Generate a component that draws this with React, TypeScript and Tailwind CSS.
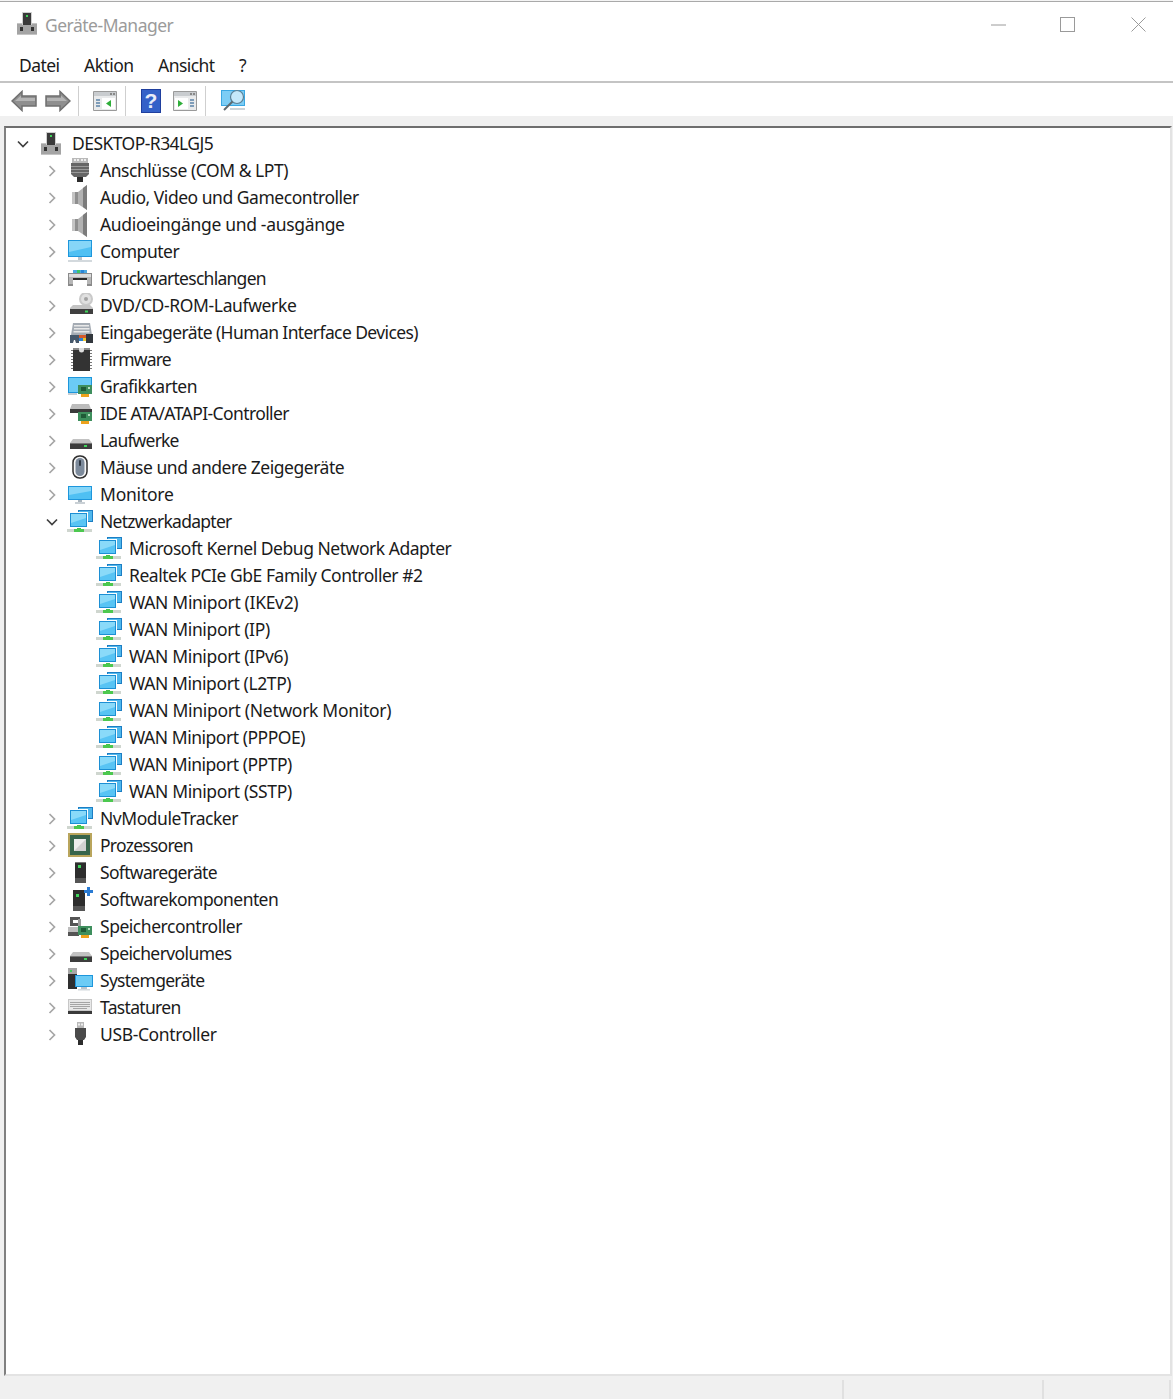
import React from "react";

const S = ({ children }: { children: React.ReactNode }) => (
  <svg width={26} height={26} viewBox="0 0 26 26">{children}</svg>
);

const Tower = () => (
  <S>
    <path d="M3 12h20v12H3z" fill="#a4a4a4" />
    <path d="M3 12h20v1H3zM3 23h20v1H3z" fill="#c4c4c4" />
    <path d="M8 1h10v13H8z" fill="#d0d0d0" />
    <path d="M9 2h8v12H9z" fill="#3a3a3a" />
    <rect x="12" y="4" width="2" height="2" fill="#3fd45a" />
    <rect x="6" y="16" width="3" height="4" fill="#333" />
    <rect x="17" y="16" width="3" height="4" fill="#333" />
  </S>
);
const Port = () => (
  <S>
    <path d="M5 0h16v5H5z" fill="#b9b9b9" />
    <path d="M7 1h2v2H7zM10 1h2v2h-2zM14 1h2v2h-2zM17 1h2v2h-2z" fill="#eee" />
    <path d="M4 5h18v11l-3 3H7l-3-3z" fill="#666" />
    <path d="M4 8h18v1H4zM4 11h18v1H4zM4 14h18v1H4z" fill="#9a9a9a" />
    <path d="M10 19h6v5h-6z" fill="#2c2c2c" />
  </S>
);
const Speaker = () => (
  <S>
    <path d="M5 7h6v12H5z" fill="#8f8f8f" />
    <path d="M5 7h3v12H5z" fill="#c4c4c4" />
    <path d="M11 7l9-7v25l-9-6z" fill="#b2b2b2" />
    <path d="M16 3l4-3v25l-4-3z" fill="#7c7c7c" />
  </S>
);
const Computer = () => (
  <S>
    <path d="M1 1h24v17H1z" fill="#1d96dc" />
    <path d="M2 2h22v15H2z" fill="#4fc0f3" />
    <path d="M2 2h22v6L2 13z" fill="#86d6f8" />
    <path d="M11 18h4v3h-4z" fill="#b9c4cc" />
    <path d="M1 21h24v2H1z" fill="#d3d9dd" />
  </S>
);
const MonitorIcon = () => (
  <S>
    <path d="M1 4h24v14H1z" fill="#1d96dc" />
    <path d="M2 5h22v12H2z" fill="#4fc0f3" />
    <path d="M2 5h22v4L2 13z" fill="#86d6f8" />
    <path d="M11 18h4v2h-4z" fill="#a9b4bc" />
    <path d="M8 20h10v2H8z" fill="#c9d0d5" />
  </S>
);
const Printer = () => (
  <S>
    <path d="M6 4h14v4H6z" fill="#4da8e0" />
    <path d="M10 4h3v4h-3z" fill="#38c66a" />
    <path d="M14 4h3v4h-3z" fill="#2a86d8" />
    <path d="M1 7h24v13H1z" fill="#8a8a8a" />
    <path d="M2 8h22v3H2z" fill="#dcdcdc" />
    <path d="M2 11h22v7H2z" fill="#b6b6b6" />
    <path d="M6 12h14v9H6z" fill="#fff" />
    <path d="M6 12h14v2H6z" fill="#2a2a2a" />
  </S>
);
const Dvd = () => (
  <S>
    <circle cx="19" cy="6" r="7" fill="#c9c9c9" />
    <circle cx="19" cy="6" r="5" fill="#e0e0e0" />
    <circle cx="19" cy="6" r="2" fill="#a2a2a2" />
    <path d="M6 12h17l3 3v6H3v-6z" fill="#c4c4c4" />
    <path d="M3 16h23v5H3z" fill="#3f3f3f" />
    <rect x="18" y="17.500" width="3" height="2" fill="#3fd45a" />
  </S>
);
const Hid = () => (
  <S>
    <path d="M6 3h17l2 12H4z" fill="#a5acb4" />
    <path d="M7 5h15v1.500H7zM7 8h15.500v1.500H7zM6.500 11h16v1.500h-16z" fill="#e8e8e8" />
    <path d="M3 15h9v8H9l-1-3H7l-1 3H3z" fill="#46586b" />
    <path d="M19 14h7v9h-7z" fill="#32373d" />
    <path d="M12 15h7v3h-7z" fill="#d55a2a" />
    <path d="M12 18h4v3h-4z" fill="#2b7fd0" />
    <path d="M16 18h3v3h-3z" fill="#eac32c" />
  </S>
);
const Chip = () => (
  <S>
    <path d="M6 1h17v23H6z" fill="#333" />
    <path d="M6 1h17v2H6z" fill="#8a8a8a" />
    <path d="M4 3h2v1H4zM4 6h2v1H4zM4 9h2v1H4zM4 12h2v1H4zM4 15h2v1H4zM4 18h2v1H4zM4 21h2v1H4zM23 3h2v1h-2zM23 6h2v1h-2zM23 9h2v1h-2zM23 12h2v1h-2zM23 15h2v1h-2zM23 18h2v1h-2zM23 21h2v1h-2z" fill="#777" />
    <path d="M12 1h5v2a2.500 2.500 0 0 1-5 0z" fill="#ddd" />
  </S>
);
const Board = ({ x = 0, y = 0 }: { x?: number; y?: number }) => (
  <g transform={`translate(${x} ${y})`}>
    <path d="M0 0h14v9H0z" fill="#3e8f5d" />
    <path d="M3 2h5v4H3z" fill="#1f5a37" />
    <path d="M10 2h2v2h-2z" fill="#b6e0c0" />
    <path d="M3 9h8v3H3z" fill="#eda21c" />
  </g>
);
const Gpu = () => (
  <S>
    <path d="M1 3h24v16H1z" fill="#1d96dc" />
    <path d="M2 4h22v14H2z" fill="#6bcbf5" />
    <path d="M1 19h9v2H1z" fill="#c5ced4" />
    <Board x={11} y={11} />
  </S>
);
const Ide = () => (
  <S>
    <path d="M5 3h17l2 5H3z" fill="#bcbcbc" />
    <path d="M3 8h22v4H3z" fill="#3a3a3a" />
    <Board x={11} y={11} />
  </S>
);
const Drive = () => (
  <S>
    <path d="M6 11h16l3 4v6H3v-6z" fill="#c2c2c2" />
    <path d="M3 15h22v6H3z" fill="#3d3d3d" />
    <path d="M3 15h22v1H3z" fill="#777" />
    <rect x="17" y="17" width="3" height="2" fill="#3fd45a" />
  </S>
);
const Mouse = () => (
  <S>
    <rect x="6" y="1" width="14" height="22" rx="6.500" fill="#f5f5f5" stroke="#2e2e2e" strokeWidth="1.500" />
    <rect x="8.500" y="3" width="9" height="18" rx="4.500" fill="#7c8a9b" />
    <rect x="12" y="5" width="2" height="6" rx="1" fill="#2e3742" />
  </S>
);
const Net = () => (
  <S>
    <path d="M11 1h15v12H11z" fill="#1c7ec4" />
    <path d="M12 2h13v10H12z" fill="#4fb7ec" />
    <path d="M2 3h19v16H2z" fill="#fff" />
    <path d="M3 4h17v14H3z" fill="#1c8fd4" />
    <path d="M4 5h15v12H4z" fill="#58c4f4" />
    <path d="M4 5h15v4L4 14z" fill="#8adaf9" />
    <path d="M10 19h4v2h-4z" fill="#46c24a" />
    <path d="M0 20h25v3H0z" fill="#cfd6cf" />
    <path d="M7 20h10v3H7z" fill="#4cc84f" />
  </S>
);
const Cpu = () => (
  <S>
    <path d="M1 0h24v24H1z" fill="#b9a55c" />
    <path d="M3 2h20v20H3z" fill="#37654b" />
    <path d="M7 6h12v12H7z" fill="#d0d0d0" />
    <path d="M7 6h12L7 18z" fill="#ededed" />
  </S>
);
const SoftDev = () => (
  <S>
    <path d="M8 2h11v21H8z" fill="#2d2d2d" />
    <path d="M8 2h11v1H8z" fill="#777" />
    <rect x="11" y="5" width="3" height="3" fill="#3fd45a" />
    <path d="M8 18h11v5H8z" fill="#555" />
  </S>
);
const SoftComp = () => (
  <S>
    <path d="M6 3h12v21H6z" fill="#2d2d2d" />
    <rect x="9" y="7" width="3" height="3" fill="#3fd45a" />
    <path d="M6 19h12v5H6z" fill="#555" />
    <path d="M20 0h3v3h3v3h-3v3h-3V6h-3V3h3z" fill="#2a7bd3" />
  </S>
);
const StorageCtrl = () => (
  <S>
    <path d="M3 3h10v3H6v3h5v3H3z" fill="#555" />
    <path d="M11 5h3v7h-3z" fill="#9a9a9a" />
    <path d="M1 13h11v9H1z" fill="#bdbdbd" />
    <path d="M1 18h11v4H1z" fill="#555" />
    <Board x={11} y={12} />
  </S>
);
const Sys = () => (
  <S>
    <path d="M1 0h9v21H1z" fill="#2f2f2f" />
    <path d="M1 0h9v6H1z" fill="#a7a7a7" />
    <rect x="3" y="2" width="2" height="2" fill="#3fd45a" />
    <path d="M8 7h18v12H8z" fill="#1d96dc" />
    <path d="M9 8h16v10H9z" fill="#6bcbf5" />
    <path d="M14 19h6v2h-6z" fill="#b9c4cc" />
    <path d="M11 21h12v1.500H11z" fill="#d3d9dd" />
  </S>
);
const Keyboard = () => (
  <S>
    <path d="M1 4h24v13H1z" fill="#c7c7c7" />
    <path d="M2 5h22v10H2z" fill="#e8e8e8" />
    <path d="M3 7h20v1H3zM3 9h20v1H3zM3 11h20v1H3zM6 13h14v1H6z" fill="#a5a5a5" />
    <path d="M1 16h24v3H1z" fill="#3a3a3a" />
  </S>
);
const Usb = () => (
  <S>
    <path d="M10 0h7v6h-7z" fill="#b8b8b8" />
    <path d="M11 1.500h2v2h-2zM14 1.500h2v2h-2z" fill="#eee" />
    <path d="M8 6h11v9l-2 3h-7l-2-3z" fill="#4a4a4a" />
    <path d="M11 18h5v5h-5z" fill="#2c2c2c" />
  </S>
);

const Chevron = ({ open }: { open?: boolean }) => (
  <svg width="12" height="12" viewBox="0 0 12 12" fill="none">
    {open ? (
      <path d="M1 3.500l5 5 5-5" stroke="#404040" strokeWidth="1.700" />
    ) : (
      <path d="M3.500 1l5 5-5 5" stroke="#a6a6a6" strokeWidth="1.700" />
    )}
  </svg>
);

const Row = ({ level, icon, label, open, leaf, t = "tracking-[-0.47px]" }: { level: 0 | 1 | 2; icon: React.ReactNode; label: string; open?: boolean; leaf?: boolean; t?: string }) => (
  <div className={`flex h-[27px] items-center ${level === 0 ? "pl-[6px]" : level === 1 ? "pl-[35px]" : "pl-[64px]"}`}>
    <div className="flex h-full w-[22px] items-center justify-center">{!leaf && <Chevron open={open} />}</div>
    <div className="ml-[4px] flex h-full w-[26px] items-center justify-center">{icon}</div>
    <span className={`${level === 0 ? "ml-[8px]" : "ml-[7px]"} whitespace-nowrap text-[17.5px] leading-[25px] text-[#1b1b1b] ${t}`}>{label}</span>
  </div>
);

const before: [React.ReactNode, string, string?][] = [
  [<Port />, "Anschlüsse (COM & LPT)"],
  [<Speaker />, "Audio, Video und Gamecontroller"],
  [<Speaker />, "Audioeingänge und -ausgänge", "tracking-[-0.32px]"],
  [<Computer />, "Computer"],
  [<Printer />, "Druckwarteschlangen", "tracking-[-0.73px]"],
  [<Dvd />, "DVD/CD-ROM-Laufwerke", "tracking-[-0.37px]"],
  [<Hid />, "Eingabegeräte (Human Interface Devices)", "tracking-[-0.6px]"],
  [<Chip />, "Firmware", "tracking-[-0.84px]"],
  [<Gpu />, "Grafikkarten"],
  [<Ide />, "IDE ATA/ATAPI-Controller", "tracking-[-0.6px]"],
  [<Drive />, "Laufwerke", "tracking-[-0.8px]"],
  [<Mouse />, "Mäuse und andere Zeigegeräte"],
  [<MonitorIcon />, "Monitore", "tracking-[-0.22px]"],
];
const adapters: [string, string?][] = [
  ["Microsoft Kernel Debug Network Adapter"],
  ["Realtek PCIe GbE Family Controller #2"],
  ["WAN Miniport (IKEv2)", "tracking-[-0.32px]"],
  ["WAN Miniport (IP)", "tracking-[-0.35px]"],
  ["WAN Miniport (IPv6)", "tracking-[-0.35px]"],
  ["WAN Miniport (L2TP)", "tracking-[-0.4px]"],
  ["WAN Miniport (Network Monitor)", "tracking-[-0.3px]"],
  ["WAN Miniport (PPPOE)"],
  ["WAN Miniport (PPTP)"],
  ["WAN Miniport (SSTP)", "tracking-[-0.37px]"],
];
const after: [React.ReactNode, string, string?][] = [
  [<Net />, "NvModuleTracker"],
  [<Cpu />, "Prozessoren", "tracking-[-0.74px]"],
  [<SoftDev />, "Softwaregeräte", "tracking-[-0.68px]"],
  [<SoftComp />, "Softwarekomponenten", "tracking-[-0.57px]"],
  [<StorageCtrl />, "Speichercontroller"],
  [<Drive />, "Speichervolumes", "tracking-[-0.6px]"],
  [<Sys />, "Systemgeräte", "tracking-[-0.72px]"],
  [<Keyboard />, "Tastaturen", "tracking-[-0.67px]"],
  [<Usb />, "USB-Controller", "tracking-[-0.37px]"],
];

const Arrow = ({ flip }: { flip?: boolean }) => (
  <svg width="26" height="22" viewBox="0 0 26 22" className={flip ? "-scale-x-100" : ""}>
    <path d="M1 11L11 1.500V6h14v10H11v4.500z" fill="#8f8f8f" stroke="#707070" strokeWidth="1.500" />
    <path d="M4 11l6-5.500V8h14v3z" fill="#b5b5b5" />
  </svg>
);
const Sep = () => <div className="h-[30px] w-px bg-[#cfcfcf]" />;
const Win = ({ right }: { right?: boolean }) => (
  <svg width="24" height="20" viewBox="0 0 24 20">
    <path d="M.5.500h23v19H.5z" fill="#e9eaeb" stroke="#9a9a9a" />
    <path d="M1 1h22v4H1z" fill="#c9cccf" />
    <path d="M17 2h2v2h-2zM20 2h2v2h-2z" fill="#888" />
    {right ? (
      <>
        <path d="M2 7h13v11H2z" fill="#fff" />
        <path d="M17 8h4v2h-4zM17 11h4v2h-4zM17 14h4v2h-4z" fill="#7f9db9" />
        <path d="M5 9l5 3.500L5 16z" fill="#2fae3a" />
      </>
    ) : (
      <>
        <path d="M9 7h13v11H9z" fill="#fff" />
        <path d="M3 8h4v2H3zM3 11h4v2H3zM3 14h4v2H3z" fill="#7f9db9" />
        <path d="M18 9l-5 3.500 5 3.500z" fill="#2fae3a" />
      </>
    )}
  </svg>
);
const Help = () => (
  <svg width="20" height="24" viewBox="0 0 20 24">
    <rect width="20" height="24" fill="#1f3f9e" />
    <rect x="1" y="1" width="18" height="22" fill="#3461c8" />
    <text x="10" y="19" textAnchor="middle" fontSize="21" fontWeight="700" fill="#e8ecf8" fontFamily="'Liberation Sans',sans-serif">?</text>
  </svg>
);
const Scan = () => (
  <svg width="26" height="24" viewBox="0 0 26 24">
    <path d="M1 1h24v16H1z" fill="#3aa7e2" />
    <path d="M2 2h22v14H2z" fill="#7ccdf5" />
    <circle cx="17" cy="8" r="6.500" fill="#c5e8fa" stroke="#5b7f95" strokeWidth="1.200" />
    <path d="M12.500 12.500L4 21" stroke="#5f6a70" strokeWidth="2" />
    <path d="M10 19h15v2H10z" fill="#ccd4d9" />
  </svg>
);

export default function App() {
  return (
    <div className="flex h-[1399px] w-[1173px] flex-col overflow-hidden bg-white font-['Noto_Sans','Open_Sans',sans-serif]">
      <div className="h-px bg-[#f4f4f4]" />
      <div className="h-px bg-[#a9a9a9]" />
      <div className="flex h-[46px] items-center justify-between">
        <div className="mb-[2px] flex items-center pl-[14px]">
          <Tower />
          <span className="ml-[5px] pt-[2px] text-[17.5px] tracking-[-0.5px] text-[#9b9b9b]">Geräte-Manager</span>
        </div>
        <div className="mb-[1px] flex items-center">
          <svg width="15" height="2" viewBox="0 0 15 2" className="mr-[54px]"><path d="M0 1h15" stroke="#9a9a9a" /></svg>
          <div className="mr-[56px] h-[15px] w-[15px] border border-[#9a9a9a]" />
          <svg width="15" height="15" viewBox="0 0 15 15" className="mr-[27px]"><path d="M.5.500l14 14M14.500.500l-14 14" stroke="#9a9a9a" /></svg>
        </div>
      </div>
      <div className="flex h-[33px] items-center gap-[24.5px] pl-[19px] pt-[2px] text-[17.5px] tracking-[-0.55px] text-[#1b1b1b]">
        <span>Datei</span>
        <span>Aktion</span>
        <span>Ansicht</span>
        <span>?</span>
      </div>
      <div className="h-[2px] bg-[#c4c4c4]" />
      <div className="flex h-[33px] items-center pl-[11px] pt-[2px]">
        <Arrow />
        <div className="ml-[8px]"><Arrow flip /></div>
        <div className="ml-[7px]"><Sep /></div>
        <div className="ml-[14px]"><Win /></div>
        <div className="ml-[8px]"><Sep /></div>
        <div className="ml-[15px]"><Help /></div>
        <div className="ml-[12px]"><Win right /></div>
        <div className="ml-[8px]"><Sep /></div>
        <div className="ml-[14px]"><Scan /></div>
      </div>
      <div className="h-[10px] bg-[#f0f0f0]" />
      <div className="flex min-h-0 flex-1">
        <div className="w-[4px] bg-[#f0f0f0]" />
        <div className="flex-1 border-b-2 border-l-2 border-r-2 border-t-2 border-b-[#e3e3e3] border-l-[#808080] border-r-[#e3e3e3] border-t-[#6e6e6e]">
          <div className="pt-[2px]">
            <Row level={0} icon={<Tower />} label="DESKTOP-R34LGJ5" open t="tracking-[-0.55px]" />
            {before.map(([i, l, t]) => <Row key={l} level={1} icon={i} label={l} t={t} />)}
            <Row level={1} icon={<Net />} label="Netzwerkadapter" open t="tracking-[-0.73px]" />
            {adapters.map(([l, t]) => <Row key={l} level={2} leaf icon={<Net />} label={l} t={t} />)}
            {after.map(([i, l, t]) => <Row key={l} level={1} icon={i} label={l} t={t} />)}
          </div>
        </div>
        <div className="w-px bg-[#f0f0f0]" />
      </div>
      <div className="flex h-[23px] items-end bg-[#f0f0f0]">
        <div className="h-[19px] w-[844px] border-r-2 border-[#e0e0e0]" />
        <div className="h-[19px] w-[200px] border-r-2 border-[#e0e0e0]" />
        <div className="h-[19px] w-[127px] border-r-2 border-[#e0e0e0]" />
      </div>
    </div>
  );
}
